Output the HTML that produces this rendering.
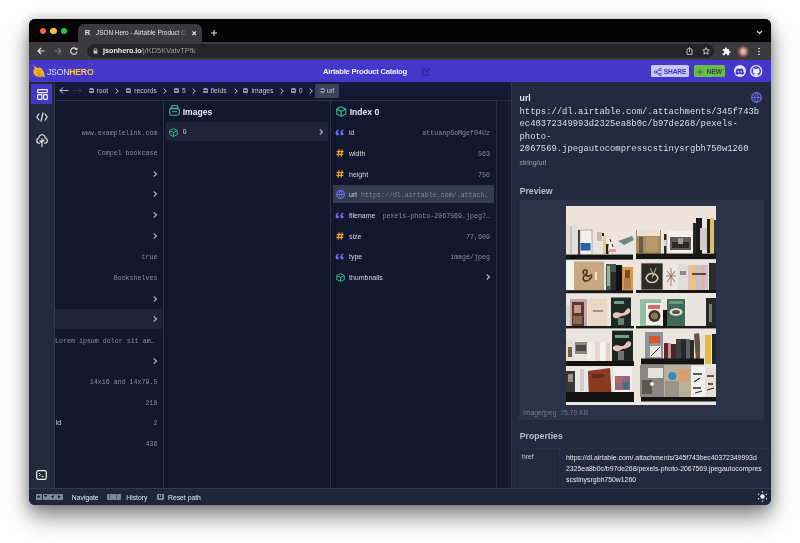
<!DOCTYPE html>
<html><head><meta charset="utf-8">
<style>
*{box-sizing:border-box;margin:0;padding:0}
html,body{width:800px;height:543px;overflow:hidden;background:#fff;font-family:"Liberation Sans",sans-serif}
.a{position:absolute}
#win{position:absolute;left:29px;top:19px;width:742px;height:485.6px;border-radius:6px;overflow:hidden;background:#12172d;box-shadow:0 11px 22px rgba(0,0,0,.5),0 0 10px rgba(0,0,0,.22)}
#pg{position:absolute;left:-29px;top:-19px;width:800px;height:543px;will-change:transform;-webkit-font-smoothing:antialiased}
.t{position:absolute;white-space:nowrap;line-height:1}
.mono{font-family:"Liberation Mono",monospace}
svg{position:absolute;overflow:visible}
.bi{position:absolute;top:88.2px;width:5.2px;height:5.2px;background:#9197a8;border-radius:1.6px 1.6px 1px 1px}
.bi::after{content:'';position:absolute;left:.9px;right:.9px;top:2.3px;height:.9px;background:#161b33}
.bt{top:88.2px;font-size:6.8px;color:#c1c6d2}
.bch{top:85.6px;font-size:9px;color:#c1c6d2}
.c1v{right:642.5px;font-size:6.65px;color:#868d9f}
.ch{position:absolute;width:4px;height:4px;border-top:1px solid #b9bfcc;border-right:1px solid #b9bfcc;transform:rotate(45deg)}
.h{position:absolute;left:336px;font-size:9.5px;font-weight:bold;color:#f0a33a;line-height:1}
.k{left:349px;font-size:7px;color:#d3d8e3}
.key{position:absolute;top:493.7px;width:6.4px;height:6.4px;background:#7f889b;border-radius:.8px}
.c3v{right:310px;font-size:6.65px;color:#868d9f}

</style></head><body>
<div id="win"><div id="pg">
  <!-- tab strip -->
  <div class="a" style="left:29px;top:19px;width:742px;height:23px;background:#040404"></div>
  <div class="a" style="left:39.7px;top:27.5px;width:6.6px;height:6.6px;border-radius:50%;background:#fb5f58"></div>
  <div class="a" style="left:50.2px;top:27.5px;width:6.6px;height:6.6px;border-radius:50%;background:#fcbc30"></div>
  <div class="a" style="left:60.7px;top:27.5px;width:6.6px;height:6.6px;border-radius:50%;background:#2ac742"></div>
  <div class="a" style="left:78px;top:24.3px;width:124px;height:18px;background:#3a393e;border-radius:6px 6px 0 0"></div>
  <div class="t" style="left:84.8px;top:29.3px;font-size:7.6px;font-weight:bold;color:#dfe3ea">R</div>
  <div class="t" style="left:96px;top:30px;font-size:6.4px;color:#e6e6e6;width:90px;overflow:hidden">JSON Hero - Airtable Product Catalog</div>
  <div class="a" style="left:176px;top:26px;width:12px;height:12px;background:linear-gradient(90deg,rgba(58,57,62,0),#3a393e)"></div>
  <svg style="left:192px;top:30.6px" width="4.4" height="4.4"><path d="M0.4 0.4L4 4M4 0.4L0.4 4" stroke="#e4e4e4" stroke-width="1.1"/></svg>
  <svg style="left:211px;top:29.7px" width="6" height="6"><path d="M3 0V6M0 3H6" stroke="#e6e6e6" stroke-width="1"/></svg>
  <svg style="left:755.5px;top:30px" width="7" height="5"><path d="M1 1L3.5 3.5L6 1" stroke="#e0e0e0" stroke-width="1.1" fill="none"/></svg>
  <!-- toolbar -->
  <div class="a" style="left:29px;top:41.7px;width:742px;height:18.3px;background:#3a393e"></div>
  <svg style="left:37px;top:47px" width="8" height="8"><path d="M7.5 4H1M4 1L1 4L4 7" stroke="#e8e8e8" stroke-width="1.1" fill="none"/></svg>
  <svg style="left:54px;top:47px" width="8" height="8"><path d="M0.5 4H7M4 1L7 4L4 7" stroke="#7a7a7e" stroke-width="1.1" fill="none"/></svg>
  <svg style="left:70px;top:47px" width="8" height="8"><path d="M6.6 2.4A3.2 3.2 0 1 0 7 4.6" stroke="#e8e8e8" stroke-width="1.1" fill="none"/><path d="M7.4 0.4V3H4.8Z" fill="#e8e8e8"/></svg>
  <div class="a" style="left:87px;top:43.6px;width:627px;height:14.1px;background:#242327;border-radius:7px"></div>
  <svg style="left:92.5px;top:47.5px" width="5" height="6"><path d="M1.2 2.6V1.8A1.3 1.3 0 0 1 3.8 1.8V2.6" stroke="#c8c8c8" stroke-width=".8" fill="none"/><rect x="0.6" y="2.6" width="3.8" height="3" fill="#c8c8c8"/></svg>
  <div class="t" style="left:103px;top:47px;font-size:7.2px;font-weight:bold;color:#f2f2f2">jsonhero.io</div>
  <div class="t" style="left:141px;top:47px;font-size:7.4px;color:#9c9ca0">/j/KD5KVatvTPfk</div>
  <svg style="left:685.5px;top:47px" width="7" height="8"><path d="M2 2.2H1V7.4H6V2.2H5" stroke="#c8c8c8" stroke-width=".9" fill="none"/><path d="M3.5 0.4V4.8M2 1.9L3.5 0.4L5 1.9" stroke="#c8c8c8" stroke-width=".9" fill="none"/></svg>
  <svg style="left:701.5px;top:47px" width="8" height="8"><path d="M4 0.6L5 2.9L7.4 3.1L5.6 4.7L6.1 7.1L4 5.8L1.9 7.1L2.4 4.7L0.6 3.1L3 2.9Z" stroke="#d8d8d8" stroke-width=".9" fill="none"/></svg>
  <svg style="left:721.5px;top:46.8px" width="9" height="9" viewBox="0 0 24 24"><path d="M20.5 11H19V7c0-1.1-.9-2-2-2h-4V3.5C13 2.12 11.88 1 10.5 1S8 2.12 8 3.5V5H4c-1.1 0-1.99.9-1.99 2v3.8H3.5c1.49 0 2.7 1.21 2.7 2.7s-1.21 2.7-2.7 2.7H2V20c0 1.1.9 2 2 2h3.8v-1.5c0-1.49 1.21-2.7 2.7-2.7 1.49 0 2.7 1.21 2.7 2.7V22H17c1.1 0 2-.9 2-2v-4h1.5c1.38 0 2.5-1.12 2.5-2.5S21.88 11 20.5 11z" fill="#f2f2f2"/></svg>
  <div class="a" style="left:737.3px;top:45.7px;width:11.4px;height:11.4px;border-radius:50%;background:radial-gradient(ellipse 45% 55% at 52% 50%,#ecc8bc 0,#d09a8c 45%,#8a5a60 75%,#6a4450 100%)"></div>
  <div class="a" style="left:758.4px;top:47.6px;width:1.9px;height:1.9px;border-radius:50%;background:#ececec;box-shadow:0 2.9px 0 #ececec,0 5.8px 0 #ececec"></div>

  <!-- app header -->
  <div class="a" style="left:29px;top:60px;width:742px;height:22px;background:#4338ca"></div>
  <svg style="left:32.3px;top:64.3px" width="14" height="14" viewBox="0 0 14 14"><path d="M0.6 0.3L3.2 3.6L4.3 2.6L5.2 4.2L7.8 3.6L10.2 5.2L12 8.4L12.3 11L13.6 13.6L10.6 12.2L8.6 13.2L5.4 12.6L2.6 11.3L1.2 8.6L1.6 6.2L2.6 4.6Z" fill="#f2b626"/><path d="M4.6 6.4L9.4 6.9M4.2 8.8L9.8 9.6M5.5 11L9 11.6" stroke="#a8781a" stroke-width=".8"/></svg>
  <div class="t" style="left:47px;top:67.6px;font-size:8.7px;color:#dedcfa;letter-spacing:-.25px">JSON<span style="font-weight:bold;color:#f5c54a;letter-spacing:-.2px">HERO</span></div>
  <div class="t" style="left:323px;top:67.8px;font-size:7.7px;font-weight:bold;color:#eeedfc;letter-spacing:-.26px">Airtable Product Catalog</div>
  <svg style="left:421.5px;top:67px" width="9" height="9"><path d="M7 4.8V8.2H0.8V2H4.2" stroke="#2d2796" stroke-width="1" fill="none"/><path d="M3 6L3.3 4.4L7.2 0.6L8.4 1.8L4.6 5.7Z" fill="#2d2796"/></svg>
  <div class="a" style="left:651px;top:65.3px;width:38px;height:12.2px;background:#c7c8f4;border-radius:1.5px"></div>
  <svg style="left:654.3px;top:67.8px" width="8" height="8" viewBox="0 0 8 8" style="width:7px;height:7px"><circle cx="1.7" cy="4" r="1.3" stroke="#4338ca" stroke-width=".9" fill="none"/><circle cx="6.2" cy="1.5" r="1.2" stroke="#4338ca" stroke-width=".9" fill="none"/><circle cx="6.2" cy="6.5" r="1.2" stroke="#4338ca" stroke-width=".9" fill="none"/><path d="M2.9 3.3L5.1 2M2.9 4.7L5.1 6" stroke="#4338ca" stroke-width=".9"/></svg>
  <div class="t" style="left:663.7px;top:68.6px;font-size:6.7px;font-weight:bold;color:#3b32b8;letter-spacing:-.15px">SHARE</div>
  <div class="a" style="left:694px;top:65.3px;width:31px;height:12.2px;background:#6dbb4e;border-radius:1.5px"></div>
  <svg style="left:697.3px;top:68.5px" width="6" height="6"><path d="M3 0V6M0 3H6" stroke="#2d5a22" stroke-width=".8"/></svg>
  <div class="t" style="left:706.8px;top:68.6px;font-size:6.7px;font-weight:bold;color:#2b4d1f;letter-spacing:-.15px">NEW</div>
  <div class="a" style="left:733.8px;top:64.8px;width:12.4px;height:12.4px;border-radius:50%;background:#e6e4fc"></div>
  <svg style="left:735.3px;top:67.6px" width="9.4" height="7" viewBox="0 0 8 6.2"><path d="M1.2 0.8L3 0.2L3.4 0.9H4.6L5 0.2L6.8 0.8L7.9 4.9L6 6.1L5.4 5.3H2.6L2 6.1L0.1 4.9Z" fill="#4338ca"/><circle cx="2.8" cy="3.3" r=".75" fill="#e6e4fc"/><circle cx="5.2" cy="3.3" r=".75" fill="#e6e4fc"/></svg>
  
  <svg style="left:750.2px;top:64.8px" width="12.4" height="12.4" viewBox="0 0 16 16"><circle cx="8" cy="8" r="7.1" fill="#4338ca" stroke="#eceaff" stroke-width="1.7"/><path d="M6 14.6V12.9C4.4 13.1 3.9 12.1 3.7 11.7C3.5 11.3 3.1 11 2.8 10.9C2.6 10.8 2.8 10.6 3.1 10.6C3.7 10.7 4.1 11.2 4.3 11.5C4.8 12.3 5.6 12.1 6.1 11.9C6.2 11.5 6.3 11.2 6.5 11C5 10.8 3.6 10.2 3.6 7.8C3.6 7.1 3.9 6.5 4.3 6.1C4.2 5.9 4 5.2 4.4 4.3C4.4 4.3 5 4.1 6.2 5C6.8 4.8 7.4 4.7 8 4.7C8.6 4.7 9.2 4.8 9.8 5C11 4.1 11.6 4.3 11.6 4.3C12 5.2 11.8 5.9 11.7 6.1C12.1 6.5 12.4 7.1 12.4 7.8C12.4 10.2 11 10.8 9.5 11C9.8 11.2 10 11.6 10 12.2V14.6Z" fill="#eceaff"/></svg>

  <!-- sidebar -->
  <div class="a" style="left:29px;top:82px;width:26px;height:406px;background:#212a3b;border-right:1px solid #2d384c"></div>
  <div class="a" style="left:31px;top:83.5px;width:21px;height:20.5px;background:#4338ca"></div>
  <svg style="left:36.5px;top:88.5px" width="11" height="11"><rect x=".6" y=".6" width="9.8" height="3" rx=".8" stroke="#fff" stroke-width="1.1" fill="none"/><rect x=".6" y="5.6" width="4.4" height="4.8" rx=".8" stroke="#fff" stroke-width="1.1" fill="none"/><rect x="6.6" y="5.6" width="3.8" height="4.8" rx=".8" stroke="#fff" stroke-width="1.1" fill="none"/></svg>
  <svg style="left:36px;top:112px" width="12" height="10"><path d="M3 2L0.8 5L3 8M9 2L11.2 5L9 8M7 0.8L5 9.2" stroke="#f2f2f2" stroke-width="1.2" fill="none" stroke-linecap="round" stroke-linejoin="round"/></svg>
  <svg style="left:36px;top:133.5px" width="12" height="13"><path d="M6 12.5V4.5M6 9L4 7M6 8L8 6M3.5 9.2C1.8 9.2 0.7 8 0.7 6.5C0.7 5.2 1.6 4.2 2.8 4C3 2 4.3 0.7 6 0.7C7.7 0.7 9 2 9.2 4C10.4 4.2 11.3 5.2 11.3 6.5C11.3 8 10.2 9.2 8.5 9.2" stroke="#f2f2f2" stroke-width="1.1" fill="none" stroke-linecap="round" stroke-linejoin="round"/></svg>
  <svg style="left:36px;top:469.5px" width="11" height="10"><rect x=".7" y=".7" width="9.6" height="8.6" rx="1.6" stroke="#f2f2f2" stroke-width="1.2" fill="none"/><path d="M3 3L4.6 4.6L3 6.2M5.5 6.6H7.6" stroke="#f2f2f2" stroke-width="1" fill="none"/></svg>

  <!-- breadcrumb bar -->
  <div class="a" style="left:55px;top:82px;width:456px;height:18.5px;background:linear-gradient(#141a3c,#12172f);border-bottom:1px solid #2a3148"></div>
  <svg style="left:59px;top:87px" width="10" height="8"><path d="M9.5 3.5H1M4 0.5L1 3.5L4 6.5" stroke="#d4d8e2" stroke-width=".9" fill="none"/></svg>
  <svg style="left:71.5px;top:87px" width="10" height="8"><path d="M0.5 3.5H9M6 0.5L9 3.5L6 6.5" stroke="#363d52" stroke-width=".9" fill="none"/></svg>
  <div class="bi" style="left:88.5px"></div><div class="t bt" style="left:96.5px">root</div><svg style="left:115.0px;top:88px" width="4" height="6"><path d="M0.6 0.5L3.3 3L0.6 5.5" stroke="#b9bfcc" stroke-width="1" fill="none"/></svg>
  <div class="bi" style="left:126px"></div><div class="t bt" style="left:134.2px">records</div><svg style="left:163.0px;top:88px" width="4" height="6"><path d="M0.6 0.5L3.3 3L0.6 5.5" stroke="#b9bfcc" stroke-width="1" fill="none"/></svg>
  <div class="bi" style="left:174px"></div><div class="t bt" style="left:182px">5</div><svg style="left:192.0px;top:88px" width="4" height="6"><path d="M0.6 0.5L3.3 3L0.6 5.5" stroke="#b9bfcc" stroke-width="1" fill="none"/></svg>
  <div class="bi" style="left:202.5px"></div><div class="t bt" style="left:210.7px">fields</div><svg style="left:233.5px;top:88px" width="4" height="6"><path d="M0.6 0.5L3.3 3L0.6 5.5" stroke="#b9bfcc" stroke-width="1" fill="none"/></svg>
  <div class="bi" style="left:243px"></div><div class="t bt" style="left:251.5px">images</div><svg style="left:280.2px;top:88px" width="4" height="6"><path d="M0.6 0.5L3.3 3L0.6 5.5" stroke="#b9bfcc" stroke-width="1" fill="none"/></svg>
  <div class="bi" style="left:291px"></div><div class="t bt" style="left:298.7px">0</div><svg style="left:308.5px;top:88px" width="4" height="6"><path d="M0.6 0.5L3.3 3L0.6 5.5" stroke="#b9bfcc" stroke-width="1" fill="none"/></svg>
  <div class="a" style="left:315px;top:84px;width:24px;height:13.7px;background:#3a4357;border-radius:1.5px"></div>
  <div class="bi" style="left:319.5px;border-radius:50%"></div><div class="t bt" style="left:327px">url</div>

  <!-- column 1 -->
  <div class="a" style="left:163px;top:100.5px;width:1px;height:388px;background:#283146"></div>
  <div class="a" style="left:55px;top:308.8px;width:106.5px;height:20px;background:#1e2337"></div>
  <div class="t mono c1v" style="top:129.7px">www.examplelink.com</div>
  <div class="t mono c1v" style="top:150.4px">Compel bookcase</div>
  <svg style="left:153.3px;top:170.7px" width="4.5" height="6"><path d="M0.7 0.5L3.6 3L0.7 5.5" stroke="#b4bac7" stroke-width="1.05" fill="none"/></svg>
  <svg style="left:153.3px;top:191.4px" width="4.5" height="6"><path d="M0.7 0.5L3.6 3L0.7 5.5" stroke="#b4bac7" stroke-width="1.05" fill="none"/></svg>
  <svg style="left:153.3px;top:212.1px" width="4.5" height="6"><path d="M0.7 0.5L3.6 3L0.7 5.5" stroke="#b4bac7" stroke-width="1.05" fill="none"/></svg>
  <svg style="left:153.3px;top:232.8px" width="4.5" height="6"><path d="M0.7 0.5L3.6 3L0.7 5.5" stroke="#b4bac7" stroke-width="1.05" fill="none"/></svg>
  <div class="t mono c1v" style="top:254.2px">true</div>
  <div class="t mono c1v" style="top:274.9px">Bookshelves</div>
  <svg style="left:153.3px;top:295.5px" width="4.5" height="6"><path d="M0.7 0.5L3.6 3L0.7 5.5" stroke="#b4bac7" stroke-width="1.05" fill="none"/></svg>
  <svg style="left:153.3px;top:316.2px" width="4.5" height="6"><path d="M0.7 0.5L3.6 3L0.7 5.5" stroke="#b4bac7" stroke-width="1.05" fill="none"/></svg>
  <div class="t mono c1v" style="top:337.5px;left:55px;right:auto">Lorem ipsum dolor sit am&#x2026;</div>
  <svg style="left:153.3px;top:357.6px" width="4.5" height="6"><path d="M0.7 0.5L3.6 3L0.7 5.5" stroke="#b4bac7" stroke-width="1.05" fill="none"/></svg>
  <div class="t mono c1v" style="top:378.8px">14x16 and 14x79.5</div>
  <div class="t mono c1v" style="top:399.5px">218</div>
  <div class="t" style="left:55.5px;top:419.3px;font-size:7.4px;color:#c9cfdb">ld</div>
  <div class="t mono c1v" style="top:420.2px">2</div>
  <div class="t mono c1v" style="top:440.9px">436</div>

  <!-- column 2 -->
  <div class="a" style="left:329.5px;top:100.5px;width:1px;height:388px;background:#283146"></div>
  <svg style="left:169px;top:105.2px" width="11" height="11"><path d="M2.6 0.8H8.4L9.2 3.4H1.8Z" stroke="#3fb6b0" stroke-width="1.1" fill="none" stroke-linejoin="round"/><rect x="0.7" y="3.6" width="9.6" height="6.6" rx="1.6" stroke="#3fb6b0" stroke-width="1.1" fill="none"/><path d="M3 6.7H8" stroke="#3fb6b0" stroke-width="1"/></svg>
  <div class="t" style="left:182.7px;top:108px;font-size:8.6px;font-weight:bold;color:#e7eaf2">Images</div>
  <div class="a" style="left:166px;top:121.8px;width:162px;height:18.8px;background:#1e2337;border-radius:1px"></div>
  <svg class="cube" style="left:169px;top:127.5px" width="9" height="9"><path d="M4.5 0.6L8.3 2.6V6.6L4.5 8.5L0.7 6.6V2.6Z M0.9 2.7L4.5 4.6L8.1 2.7M4.5 4.6V8.4" stroke="#34b389" stroke-width="1" fill="none" stroke-linejoin="round"/></svg>
  <div class="t" style="left:182.7px;top:129.2px;font-size:6.8px;color:#d6dbe6">0</div>
  <svg style="left:318.8px;top:129.2px" width="4.5" height="6"><path d="M0.7 0.5L3.6 3L0.7 5.5" stroke="#b4bac7" stroke-width="1.05" fill="none"/></svg>

  <!-- column 3 -->
  <div class="a" style="left:497px;top:100.5px;width:14px;height:388px;background:#14192f"></div>
  <div class="a" style="left:496px;top:100.5px;width:1px;height:388px;background:#283146"></div>
  <svg style="left:336px;top:105.5px" width="10.5" height="11"><path d="M5.2 0.7L9.8 3V8L5.2 10.3L0.7 8V3Z M0.9 3.1L5.2 5.4L9.6 3.1M5.2 5.4V10.2" stroke="#34b389" stroke-width="1.2" fill="none" stroke-linejoin="round"/></svg>
  <div class="t" style="left:349.7px;top:108px;font-size:8.6px;font-weight:bold;color:#e7eaf2">Index 0</div>
  <div class="a" style="left:332.6px;top:184.7px;width:161.8px;height:18.8px;background:#343c50;border-radius:1px"></div>
  <!-- rows -->
  <svg style="left:335.2px;top:128.6px" width="9" height="7"><path d="M3.6 0.6C1.6 1.1 0.6 2.4 0.6 4.3C0.6 5.5 1.3 6.4 2.3 6.4C3.2 6.4 3.9 5.7 3.9 4.8C3.9 3.9 3.2 3.3 2.3 3.4C2.5 2.5 3.1 1.9 3.9 1.6Z M8.3 0.6C6.3 1.1 5.3 2.4 5.3 4.3C5.3 5.5 6 6.4 7 6.4C7.9 6.4 8.6 5.7 8.6 4.8C8.6 3.9 7.9 3.3 7 3.4C7.2 2.5 7.8 1.9 8.6 1.6Z" fill="#6a6cf0"/></svg><div class="t k" style="top:129.2px">id</div><div class="t mono c3v" style="top:130.2px">attuanpGoMgef04Uz</div>
  <svg style="left:336px;top:148.8px" width="8" height="8"><path d="M3.1 0.4L2.1 7.6M6.1 0.4L5.1 7.6M0.6 2.6H7.6M0.3 5.4H7.3" stroke="#f1a234" stroke-width="1.2" fill="none"/></svg><div class="t k" style="top:149.9px">width</div><div class="t mono c3v" style="top:150.9px">563</div>
  <svg style="left:336px;top:169.5px" width="8" height="8"><path d="M3.1 0.4L2.1 7.6M6.1 0.4L5.1 7.6M0.6 2.6H7.6M0.3 5.4H7.3" stroke="#f1a234" stroke-width="1.2" fill="none"/></svg><div class="t k" style="top:170.6px">height</div><div class="t mono c3v" style="top:171.6px">750</div>
  <svg style="left:336px;top:190px" width="9" height="9"><circle cx="4.5" cy="4.5" r="3.9" stroke="#6c6ff5" stroke-width="1.1" fill="none"/><path d="M0.7 4.5H8.3M4.5 0.7C2.6 2.8 2.6 6.2 4.5 8.3C6.4 6.2 6.4 2.8 4.5 0.7" stroke="#6c6ff5" stroke-width=".9" fill="none"/></svg>
  <div class="t k" style="top:191.3px">url</div><div class="t mono c3v" style="top:192.3px;right:auto;left:361px;width:130px;overflow:hidden;color:#7d869a">https://dl.airtable.com/.attach&#x2026;</div>
  <svg style="left:335.2px;top:211.5px" width="9" height="7"><path d="M3.6 0.6C1.6 1.1 0.6 2.4 0.6 4.3C0.6 5.5 1.3 6.4 2.3 6.4C3.2 6.4 3.9 5.7 3.9 4.8C3.9 3.9 3.2 3.3 2.3 3.4C2.5 2.5 3.1 1.9 3.9 1.6Z M8.3 0.6C6.3 1.1 5.3 2.4 5.3 4.3C5.3 5.5 6 6.4 7 6.4C7.9 6.4 8.6 5.7 8.6 4.8C8.6 3.9 7.9 3.3 7 3.4C7.2 2.5 7.8 1.9 8.6 1.6Z" fill="#6a6cf0"/></svg><div class="t k" style="top:212px">filename</div><div class="t mono c3v" style="top:213.0px">pexels-photo-2067569.jpeg?&#x2026;</div>
  <svg style="left:336px;top:231.5px" width="8" height="8"><path d="M3.1 0.4L2.1 7.6M6.1 0.4L5.1 7.6M0.6 2.6H7.6M0.3 5.4H7.3" stroke="#f1a234" stroke-width="1.2" fill="none"/></svg><div class="t k" style="top:232.7px">size</div><div class="t mono c3v" style="top:233.7px">77,609</div>
  <svg style="left:335.2px;top:252.9px" width="9" height="7"><path d="M3.6 0.6C1.6 1.1 0.6 2.4 0.6 4.3C0.6 5.5 1.3 6.4 2.3 6.4C3.2 6.4 3.9 5.7 3.9 4.8C3.9 3.9 3.2 3.3 2.3 3.4C2.5 2.5 3.1 1.9 3.9 1.6Z M8.3 0.6C6.3 1.1 5.3 2.4 5.3 4.3C5.3 5.5 6 6.4 7 6.4C7.9 6.4 8.6 5.7 8.6 4.8C8.6 3.9 7.9 3.3 7 3.4C7.2 2.5 7.8 1.9 8.6 1.6Z" fill="#6a6cf0"/></svg><div class="t k" style="top:253.4px">type</div><div class="t mono c3v" style="top:254.4px">image/jpeg</div>
  <svg style="left:336px;top:272.6px" width="9" height="9"><path d="M4.5 0.6L8.3 2.6V6.6L4.5 8.5L0.7 6.6V2.6Z M0.9 2.7L4.5 4.6L8.1 2.7M4.5 4.6V8.4" stroke="#34b389" stroke-width="1" fill="none" stroke-linejoin="round"/></svg>
  <div class="t k" style="top:274.1px">thumbnails</div>
  <svg style="left:486.3px;top:274.2px" width="4.5" height="6"><path d="M0.7 0.5L3.6 3L0.7 5.5" stroke="#b4bac7" stroke-width="1.05" fill="none"/></svg>

  <!-- right panel -->
  <div class="a" style="left:510.6px;top:82px;width:261px;height:406px;background:#212a3d;border-left:1px solid #2d384c"></div>
  <div class="t" style="left:519.6px;top:93.5px;font-size:8.7px;font-weight:bold;color:#e5e8ef">url</div>
  <svg style="left:751px;top:91.5px" width="11" height="11"><circle cx="5.5" cy="5.5" r="4.8" stroke="#6c6ff5" stroke-width="1.2" fill="none"/><path d="M0.8 5.5H10.2M5.5 0.8C3.2 3.3 3.2 7.7 5.5 10.2C7.8 7.7 7.8 3.3 5.5 0.8" stroke="#6c6ff5" stroke-width="1" fill="none"/></svg>
  <div class="a mono" style="left:519.5px;top:105.7px;font-size:8.9px;line-height:12.45px;color:#d9dee7;white-space:pre">https://dl.airtable.com/.attachments/345f743b
ec40372349993d2325ea8b0c/b97de268/pexels-
photo-
2067569.jpegautocompresscstinysrgbh750w1260</div>
  <div class="t" style="left:519.5px;top:158.7px;font-size:7px;color:#9aa1b0;letter-spacing:0">string/url</div>
  <div class="t" style="left:519.7px;top:187px;font-size:8.7px;font-weight:bold;color:#b8bfcc">Preview</div>
  <div class="a" style="left:519px;top:200.2px;width:244.5px;height:220px;background:#2a3347;border-radius:2px"></div>
  <div class="a" style="left:566px;top:206px;width:150px;height:199px;overflow:hidden;background:#ebe5df"><div class="a" style="left:0;top:0;width:150px;height:199px"><svg style="left:0;top:0" width="150" height="199" viewBox="0 0 150 199" preserveAspectRatio="none">
    <rect width="150" height="199" fill="#ebe5df"/>
    <rect x="0" y="0" width="150" height="40" fill="#eee4dc"/>
    <!-- row1 left -->
    <rect x="0" y="19" width="12" height="30" fill="#e2ddd8"/>
    <rect x="4" y="20" width="2" height="28" fill="#c9c3be"/>
    <rect x="12" y="24" width="2" height="25" fill="#3a3432"/>
    <rect x="14" y="24" width="12" height="25" fill="#f3f1ee" stroke="#8b8580" stroke-width=".6"/>
    <rect x="14.5" y="37" width="10" height="7.5" fill="#2a5fb0"/>
    <rect x="31" y="26" width="5" height="9" fill="#c2bcb2"/>
    <rect x="36" y="27" width="2" height="3" fill="#222"/>
    <rect x="37" y="30" width="3" height="18" fill="#e5cf78"/>
    <rect x="40" y="38" width="2.5" height="10" fill="#222"/>
    <path d="M44 32L50 45H42Z" fill="#f0ebe6"/><path d="M44 33L45 36M46 38L47 41" stroke="#222" stroke-width="1"/>
    <rect x="43" y="43" width="7" height="3" fill="#e49b92"/>
    <path d="M52 35L66 30L68 34L58 39Z" fill="#6e8a80"/>
    <rect x="0" y="48.6" width="67" height="5" fill="#141414"/>
    <!-- row1 right -->
    <rect x="70" y="24" width="25" height="24" fill="#a68a62"/>
    <rect x="71" y="24" width="23" height="6" fill="#e9e1d6"/>
    <rect x="73" y="31" width="4" height="16" fill="#6e5a3e"/>
    <rect x="80" y="31" width="12" height="15" fill="#b8986a"/>
    <rect x="98" y="28" width="2.5" height="20" fill="#2a2a2a"/>
    <rect x="98" y="34" width="2.5" height="6" fill="#d8d4d0"/>
    <rect x="102" y="25" width="25" height="21" fill="#f2f0ec"/>
    <rect x="104" y="31" width="21" height="13" fill="#5d5a55"/>
    <rect x="106" y="36" width="17" height="6" fill="#2c2a28"/>
    <rect x="112" y="32" width="5" height="6" fill="#a09a92"/>
    <rect x="127" y="17" width="8" height="31" fill="#262626"/>
    <rect x="130" y="12" width="6" height="36" fill="#1a1a1a"/>
    <rect x="134" y="22" width="7" height="22" fill="#cfcac4"/>
    <rect x="141" y="13" width="3" height="34" fill="#222"/>
    <rect x="144" y="12" width="4" height="35" fill="#e0c058"/>
    <rect x="148" y="14" width="2" height="34" fill="#333"/>
    <rect x="70" y="47.6" width="80" height="5.5" fill="#151515"/>
    <!-- row2 left -->
    <rect x="0" y="55" width="8" height="30" fill="#f4f2ef"/>
    <rect x="8" y="55.6" width="30" height="29" fill="#c8a883"/>
    <path d="M18 68C16 66 18 63 20 64C22 65 21 68 19 69C22 71 25 70 26 68M19 69C16 71 17 75 20 75C23 75 25 72 26 70" stroke="#4a3020" stroke-width="1.6" fill="none"/>
    <rect x="29" y="66" width="2" height="8" fill="#efe5d8"/>
    <rect x="40" y="58" width="10" height="27" fill="#3f5a52"/>
    <rect x="41" y="60" width="3" height="20" fill="#a7b07a"/>
    <rect x="45" y="66" width="5" height="19" fill="#2a2a2e"/>
    <rect x="50" y="59" width="6" height="26" fill="#111"/>
    <rect x="56" y="61" width="11" height="23" fill="#d49a4a"/>
    <rect x="59" y="64" width="5" height="8" fill="#7a4a30"/>
    <rect x="58" y="72" width="7" height="11" fill="#b87a50"/>
    <rect x="0" y="84.2" width="67" height="3" fill="#181818"/>
    <!-- row2 right -->
    <rect x="75" y="57" width="22" height="27" fill="#2b2a24" stroke="#d9d3c8" stroke-width=".8"/>
    <path d="M80 72C82 66 90 66 92 72C90 78 82 78 80 72Z" stroke="#d6ccb0" stroke-width="1.6" fill="none"/>
    <path d="M84 62L88 70M90 62L86 72" stroke="#bfb49a" stroke-width="1"/>
    <rect x="97" y="55" width="15" height="29" fill="#ebe6e3"/>
    <path d="M100 70L110 70M105 62L105 80M101 65L109 76M109 65L101 76" stroke="#8a5a4a" stroke-width=".8"/>
    <rect x="112" y="58" width="10" height="26" fill="#e0dcd8"/>
    <rect x="114" y="65" width="6" height="4" fill="#8a8a8a"/>
    <rect x="122" y="59" width="4" height="25" fill="#e4bdb8"/>
    <rect x="126" y="59" width="4" height="25" fill="#e9c66e"/>
    <rect x="130" y="59" width="3" height="25" fill="#d4b9cc"/>
    <rect x="133" y="59" width="3" height="25" fill="#b8cdb8"/>
    <rect x="136" y="59" width="3" height="25" fill="#e2b0b0"/>
    <rect x="139" y="59" width="3" height="25" fill="#c8c4d8"/>
    <rect x="126" y="67" width="14" height="2" fill="#5a4a40"/>
    <rect x="143" y="57" width="7" height="27" fill="#2e2a28"/>
    <rect x="70" y="84" width="80" height="3" fill="#171717"/>
    <!-- row3 left -->
    <rect x="0" y="99" width="4" height="23" fill="#d8d6d8"/>
    <rect x="4" y="93" width="17" height="28.5" fill="#c6a7a5"/>
    <rect x="6" y="96" width="12" height="24" fill="#5a3a30"/>
    <rect x="8" y="99" width="7" height="8" fill="#c89a8a"/>
    <rect x="7" y="110" width="9" height="8" fill="#8a6a50"/>
    <rect x="22" y="93" width="19" height="28" fill="#e9d8c6"/>
    <rect x="27" y="104" width="10" height="2" fill="#a89078"/>
    <rect x="45" y="91.5" width="20" height="28.5" fill="#1d2a24"/>
    <rect x="48" y="95" width="10" height="3" fill="#7a9a88"/>
    <path d="M47 108C52 103 56 111 60 104C62 101 65 102 64 106C62 110 56 109 52 112C49 113 46 111 47 108Z" fill="#e8c2b8"/>
    <rect x="52" y="112" width="6" height="7" fill="#6a7a70"/>
    <rect x="0" y="120" width="68" height="2.4" fill="#1a1a1a"/>
    <!-- row3 right -->
    <rect x="74" y="93" width="21" height="27" fill="#8fbf9e"/>
    <rect x="80" y="97" width="17" height="22" fill="#f4efea"/>
    <rect x="82" y="99" width="12" height="4" fill="#e06a62"/>
    <circle cx="88.5" cy="110" r="6" fill="#3a3424"/>
    <circle cx="88.5" cy="110" r="3.5" fill="#8a7a50"/>
    <rect x="97" y="104" width="4" height="16" fill="#121212"/>
    <rect x="101" y="93" width="18" height="27" fill="#3e6a56"/>
    <rect x="103" y="95" width="14" height="3" fill="#6a9a82"/>
    <ellipse cx="110" cy="106" rx="6.5" ry="3.8" fill="#e8e2d2"/>
    <ellipse cx="110" cy="106" rx="4" ry="2" fill="#4a5a48"/>
    <rect x="140" y="92" width="10" height="28" fill="#282828"/>
    <rect x="143" y="98" width="3" height="18" fill="#7a7a7a"/>
    <rect x="70" y="120" width="80" height="2.4" fill="#1a1a1a"/>
    <!-- row4 left -->
    <rect x="0" y="133" width="9" height="24" fill="#e2dedb"/>
    <rect x="2" y="141" width="4" height="10" fill="#7a5a40"/>
    <rect x="9" y="136" width="12" height="12" fill="#8a8680"/>
    <rect x="10" y="139" width="10" height="6" fill="#4a4642"/>
    <rect x="21" y="136" width="8" height="21" fill="#f0eeec"/>
    <rect x="29" y="136" width="5" height="21" fill="#e9d6cc"/>
    <rect x="34" y="136" width="6" height="21" fill="#f4f2ef"/>
    <rect x="40" y="137" width="4" height="20" fill="#d8d2c8"/>
    <rect x="46" y="124.6" width="21" height="31" fill="#1b2622"/>
    <rect x="49" y="129" width="14" height="3" fill="#7a9a8a"/>
    <path d="M47 141C52 136 56 144 60 137C62 134 66 135 65 139C63 143 57 142 53 145C50 146 46 144 47 141Z" fill="#e8c2b8"/>
    <rect x="52" y="145" width="6" height="9" fill="#6a7470"/>
    <rect x="0" y="155" width="68" height="5" fill="#131313"/>
    <!-- row4 right -->
    <rect x="79" y="126" width="18" height="27" fill="#8e949a"/>
    <rect x="83" y="130" width="11" height="7" fill="#d8542a"/>
    <rect x="84" y="140" width="11" height="11" fill="#e8e4dc"/>
    <path d="M85 150L94 141" stroke="#333" stroke-width="1"/>
    <rect x="98" y="137" width="4" height="20" fill="#5a2a2a"/>
    <rect x="102" y="137" width="3" height="20" fill="#c89090"/>
    <rect x="105" y="138" width="5" height="19" fill="#4a2424"/>
    <rect x="110" y="133" width="5" height="23" fill="#3a4244"/>
    <rect x="115" y="133" width="5" height="23" fill="#222a2c"/>
    <rect x="120" y="133" width="4" height="23" fill="#5a6266"/>
    <rect x="124" y="134" width="4" height="22" fill="#2a2a2a"/>
    <path d="M128 128L133 127L136 157L130 157Z" fill="#6a5040"/>
    <rect x="134" y="129" width="5" height="28" fill="#e9e2d6"/>
    <rect x="139" y="129" width="6" height="29" fill="#e4bc3c"/>
    <rect x="146" y="128" width="4" height="30" fill="#1e2434"/>
    <rect x="75" y="152.5" width="63" height="6" fill="#141414"/>
    <!-- row5 left -->
    <rect x="0" y="165" width="9" height="25" fill="#3a3634"/>
    <rect x="2" y="168" width="5" height="8" fill="#9a928a"/>
    <rect x="9" y="161" width="13" height="26" fill="#eae8e6"/>
    <rect x="14" y="163" width="4" height="22" fill="#d0ccc8"/>
    <path d="M22 165L44 162L46 195L23 195Z" fill="#8a3a22"/>
    <rect x="26" y="168" width="12" height="4" fill="#6a2a18"/>
    <rect x="47" y="161" width="19" height="27" fill="#f2f0ee"/>
    <rect x="49" y="170" width="15" height="14" fill="#8a6a7a"/>
    <rect x="50" y="171" width="6" height="6" fill="#b46a6a"/>
    <rect x="57" y="176" width="6" height="7" fill="#4a6a8a"/>
    <rect x="0" y="186" width="68" height="10" fill="#121212"/>
    <!-- row5 right -->
    <rect x="74" y="159" width="24" height="32" fill="#8a8680"/>
    <rect x="82" y="162" width="15" height="10" fill="#e4e0da"/>
    <rect x="76" y="174" width="10" height="14" fill="#5a5650"/>
    <circle cx="86" cy="178" r="2" fill="#f0f0f0"/>
    <rect x="98" y="159" width="27" height="36" fill="#b9b09c"/>
    <circle cx="106.5" cy="170" r="4" fill="#2a8ac8"/>
    <rect x="112" y="163" width="12" height="13" fill="#d8a070"/>
    <rect x="99" y="175" width="14" height="18" fill="#9a9486"/>
    <rect x="125" y="161" width="14" height="32" fill="#f2f0ec"/>
    <rect x="139" y="163" width="11" height="30" fill="#e8e0d4"/>
    <path d="M127 168H136M128 176L134 172M127 182H135M129 187L136 185M141 170H148M142 178H147M141 184L148 182" stroke="#2a2a2a" stroke-width="1.3"/>
    <rect x="75" y="191" width="75" height="4.5" fill="#141414"/>
  </svg></div></div>
  <div class="t" style="left:523.3px;top:409.5px;font-size:6.8px;color:#6f778a">image/jpeg&#160;&#160;75.79 KB</div>
  <div class="t" style="left:519.8px;top:432px;font-size:8.7px;font-weight:bold;color:#b8bfcc">Properties</div>
  <div class="a" style="left:519px;top:447.5px;width:252px;height:41px;border-top:1px solid #283145;border-left:1px solid #283145"></div>
  <div class="a" style="left:558.5px;top:447.5px;width:1px;height:41px;background:#283145"></div>
  <div class="t" style="left:522px;top:454px;font-size:6.8px;color:#c3c9d4">href</div>
  <div class="a" style="left:566px;top:451.5px;font-size:6.9px;line-height:11.1px;color:#e6e9ef;white-space:pre">https://dl.airtable.com/.attachments/345f743bec40372349993d
2325ea8b0c/b97de268/pexels-photo-2067569.jpegautocompres
scstinysrgbh750w1260</div>

  <!-- footer -->
  <div class="a" style="left:29px;top:488px;width:742px;height:17px;background:#1e273a;border-top:1px solid #323c50"></div>
  <div class="key" style="left:35.8px"><svg style="left:1.5px;top:1.8px" width="3.4" height="2.6"><path d="M1.7 0L3.4 2.6H0Z" fill="#0d1220"/></svg></div>
  <div class="key" style="left:42.6px"><svg style="left:1.5px;top:1.8px" width="3.4" height="2.6"><path d="M1.7 2.6L3.4 0H0Z" fill="#0d1220"/></svg></div>
  <div class="key" style="left:49.4px"><svg style="left:2px;top:1.5px" width="2.6" height="3.4"><path d="M0 1.7L2.6 0V3.4Z" fill="#0d1220"/></svg></div>
  <div class="key" style="left:56.2px"><svg style="left:2px;top:1.5px" width="2.6" height="3.4"><path d="M2.6 1.7L0 0V3.4Z" fill="#0d1220"/></svg></div>
  <div class="t" style="left:71.8px;top:494.6px;font-size:6.8px;color:#e3e7ee">Navigate</div>
  <div class="key" style="left:107.4px"><div class="t" style="left:1.8px;top:.8px;font-size:5px;color:#0d1220">[</div></div>
  <div class="key" style="left:114.2px"><div class="t" style="left:1.8px;top:.8px;font-size:5px;color:#0d1220">]</div></div>
  <div class="t" style="left:126.3px;top:494.6px;font-size:6.8px;color:#e3e7ee">History</div>
  <div class="key" style="left:157.4px"><div class="a" style="left:1.5px;top:1.8px;width:3.5px;height:2.6px;border:.7px solid #0d1220;border-top:none"></div></div>
  <div class="t" style="left:168px;top:494.6px;font-size:6.8px;color:#e3e7ee">Reset path</div>
  <svg style="left:756.5px;top:491px" width="11" height="11"><circle cx="5.5" cy="5.5" r="2.2" fill="#f2f4f8"/><g fill="#dfe3ea"><circle cx="5.5" cy="1" r=".8"/><circle cx="5.5" cy="10" r=".8"/><circle cx="1.6" cy="3.2" r=".8"/><circle cx="9.4" cy="3.2" r=".8"/><circle cx="1.6" cy="7.8" r=".8"/><circle cx="9.4" cy="7.8" r=".8"/></g></svg>
</div></div>
</body></html>
